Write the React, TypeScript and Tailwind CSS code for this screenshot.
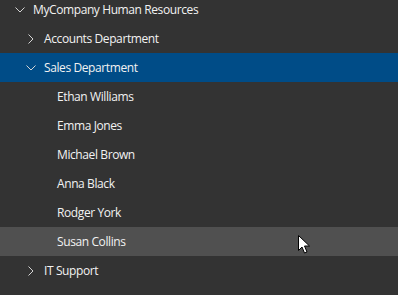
import React from "react";

type Row = {
    label: string;
    textLeft: number;
    chevron?: "down" | "right";
    chevronLeft?: number;
    state?: "selected" | "hover";
};

const rows: Row[] = [
    { label: "MyCompany Human Resources", textLeft: 33, chevron: "down", chevronLeft: 15 },
    { label: "Accounts Department", textLeft: 44, chevron: "right", chevronLeft: 28 },
    { label: "Sales Department", textLeft: 44, chevron: "down", chevronLeft: 26, state: "selected" },
    { label: "Ethan Williams", textLeft: 57 },
    { label: "Emma Jones", textLeft: 57 },
    { label: "Michael Brown", textLeft: 57 },
    { label: "Anna Black", textLeft: 57 },
    { label: "Rodger York", textLeft: 57 },
    { label: "Susan Collins", textLeft: 57, state: "hover" },
    { label: "IT Support", textLeft: 44, chevron: "right", chevronLeft: 28 },
];

const Chevron = ({ dir }: { dir: "down" | "right" }) =>
    dir === "down" ? (
        <svg width="10" height="6" viewBox="0 0 10 6" className="text-[#d4d4d4]">
            <path d="M0.5 0.5 L5 5 L9.5 0.5" fill="none" stroke="currentColor" strokeWidth="1" />
        </svg>
    ) : (
        <svg width="6" height="10" viewBox="0 0 6 10" className="text-[#d4d4d4]">
            <path d="M0.5 0.5 L5 5 L0.5 9.5" fill="none" stroke="currentColor" strokeWidth="1" />
        </svg>
    );

const Cursor = () => (
    <svg width="13" height="20" viewBox="0 0 13 20" className="absolute left-[298px] top-[235px]">
        <path d="M0.5 0.5 L0.5 15.5 L4 12 L6.5 18 L9 17 L6.5 11 L11.5 11 Z" fill="#ffffff" stroke="#000000" strokeWidth="1" />
    </svg>
);

export default function App() {
    return (
        <div className="relative w-[398px] h-[295px] overflow-hidden bg-[#333333] font-['Open_Sans',sans-serif] text-[12px] tracking-[-0.4px] text-[#f2f2f2]">
            <div className="flex flex-col mt-[-5px]">
                {rows.map((row) => (
                    <div
                        key={row.label}
                        className={`relative h-[29px] flex items-center ${
                            row.state === "selected" ? "bg-[#004c87]" : row.state === "hover" ? "bg-[#505050]" : ""
                        }`}
                    >
                        {row.chevron && (
                            <span className="absolute top-0 bottom-0 flex items-center" style={{ left: row.chevronLeft }}>
                                <Chevron dir={row.chevron} />
                            </span>
                        )}
                        <span className="whitespace-nowrap" style={{ marginLeft: row.textLeft }}>
                            {row.label}
                        </span>
                    </div>
                ))}
            </div>
            <Cursor />
        </div>
    );
}
